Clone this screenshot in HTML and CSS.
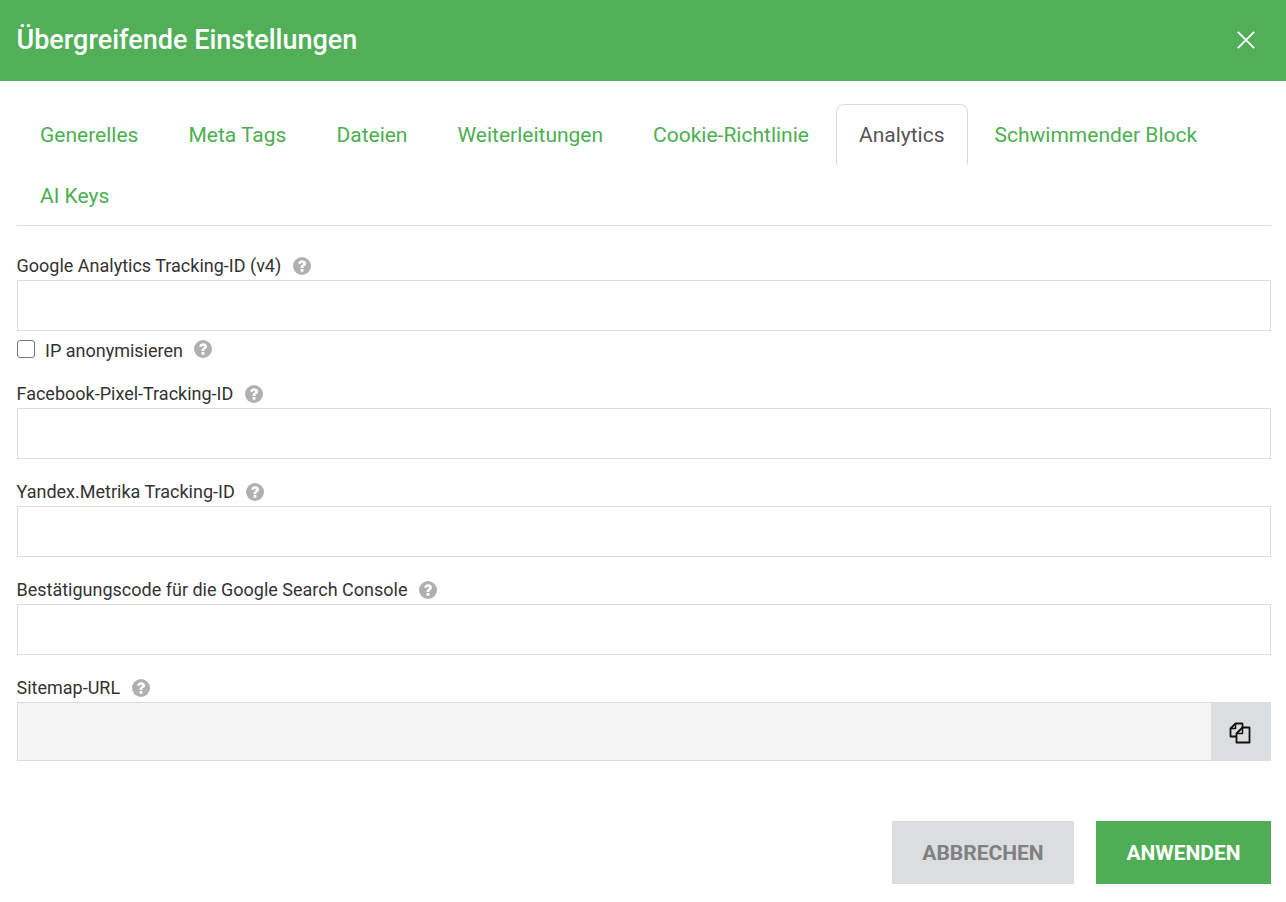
FILE: index.html
```html
<!DOCTYPE html>
<html lang="de">
<head>
<meta charset="utf-8">
<title>Übergreifende Einstellungen</title>
<link rel="stylesheet" href="styles.css">
</head>
<body>
<svg class="defs" width="0" height="0" aria-hidden="true">
  <symbol id="help" viewBox="0 0 18 18">
    <circle cx="9" cy="9" r="9" fill="#b0b0b0"/>
    <path d="M5.200 6.700C5.400 4.500 6.900 3.200 9.200 3.200c2.300 0 3.900 1.300 3.900 3.200 0 1.300-.7 2-1.700 2.700-.8.500-1 .8-1 1.500v.3H7.600v-.6c0-1.200.4-1.800 1.300-2.400.8-.5 1.100-.8 1.100-1.300 0-.5-.4-.9-1-.9-.7 0-1 .4-1.100 1.100z" fill="#fff"/>
    <rect x="7.600" y="11.900" width="2.800" height="2.800" rx=".3" fill="#fff"/>
  </symbol>
</svg>
<header class="header">
  <h1 class="title">Übergreifende Einstellungen</h1>
  <button class="close" aria-label="Schließen">
    <svg width="18" height="18" viewBox="0 0 18 18"><path d="M.8.800l16.400 16.400M17.200.800L.8 17.200" stroke="#fff" stroke-width="1.900" fill="none"/></svg>
  </button>
</header>
<main class="body">
  <nav class="tabs">
    <a class="tab">Generelles</a>
    <a class="tab">Meta Tags</a>
    <a class="tab">Dateien</a>
    <a class="tab">Weiterleitungen</a>
    <a class="tab">Cookie-Richtlinie</a>
    <a class="tab active">Analytics</a>
    <a class="tab">Schwimmender Block</a>
    <a class="tab">AI Keys</a>
  </nav>
  <form class="form">
    <div class="group first">
      <label class="label">Google Analytics Tracking-ID (v4)<svg class="help"><use href="#help"/></svg></label>
      <input class="input" type="text">
      <label class="check"><input class="box" type="checkbox"><span>IP anonymisieren</span><svg class="help"><use href="#help"/></svg></label>
    </div>
    <div class="group after-check">
      <label class="label">Facebook-Pixel-Tracking-ID<svg class="help"><use href="#help"/></svg></label>
      <input class="input" type="text">
    </div>
    <div class="group">
      <label class="label">Yandex.Metrika Tracking-ID<svg class="help"><use href="#help"/></svg></label>
      <input class="input" type="text">
    </div>
    <div class="group">
      <label class="label">Bestätigungscode für die Google Search Console<svg class="help"><use href="#help"/></svg></label>
      <input class="input" type="text">
    </div>
    <div class="group">
      <label class="label">Sitemap-URL<svg class="help"><use href="#help"/></svg></label>
      <div class="copy-row">
        <input class="input readonly" type="text" readonly>
        <button class="copy" type="button" aria-label="Kopieren">
          <svg width="24" height="24" viewBox="0 0 24 24" fill="none" stroke="#111" stroke-width="1.800" stroke-linejoin="round">
            <path d="M14.500 7.500V2.500H7.500L2.500 7.500V15.500H8.500"/>
            <path d="M7.500 2.800V7.500H2.800" stroke-width="1.500"/>
            <path d="M21.500 6.500H14.500L8.500 12.500V21.500H21.500Z"/>
            <path d="M14.500 6.800V12.500H8.800" stroke-width="1.500"/>
          </svg>
        </button>
      </div>
    </div>
    <div class="actions">
      <button class="btn cancel" type="button">ABBRECHEN</button>
      <button class="btn apply" type="button">ANWENDEN</button>
    </div>
  </form>
</main>
</body>
</html>
```
FILE: styles.css
```css
* { box-sizing: border-box; }
html, body { margin: 0; padding: 0; }
body {
  font-family: Roboto, "Liberation Sans", sans-serif;
  color: #333;
  background: #fff;
  height: 902px;
  overflow: hidden;
}
.defs { position: absolute; }
.header {
  height: 81px;
  background: #50af57;
  display: flex;
  align-items: center;
  justify-content: space-between;
  padding: 0 31px 2px 17px;
}
.title {
  margin: 0 0 0 -.5px;
  font-size: 27px;
  font-weight: 500;
  color: #fff;
}
.close {
  background: none;
  border: 0;
  padding: 0;
  width: 18px;
  height: 18px;
  display: flex;
}
.body { padding: 23px 15px 0 17px; }
.tabs {
  display: flex;
  flex-wrap: wrap;
  height: 122px;
  border-bottom: 1px solid #dcdcdc;
}
.tab {
  height: 61px;
  padding: 0 22px;
  margin-right: 4px;
  border: 1px solid transparent;
  border-bottom: 0;
  border-radius: 8px 8px 0 0;
  font-size: 21px;
  line-height: 60px;
  color: #4caf50;
}
.tab.active {
  color: #555;
  border-color: #dcdcdc;
}
.group { margin-top: 20px; }
.group.first { margin-top: 27px; }
.group.after-check { margin-top: 21px; }
.label {
  display: flex;
  align-items: center;
  height: 27px;
  margin-left: -.5px;
  padding-bottom: 2px;
  font-size: 18px;
  color: #333;
}
.help { width: 18px; height: 18px; margin-left: 11.500px; flex: none; }
.input {
  display: block;
  width: 100%;
  height: 51px;
  border: 1px solid #dcdcdc;
  background: #fff;
  padding: 0 12px;
  margin: 0;
  outline: 0;
}
.check {
  display: flex;
  align-items: center;
  height: 20px;
  margin-top: 9px;
  font-size: 18px;
}
.check .help { margin-top: -2px; }
.box {
  appearance: none;
  width: 18px;
  height: 18px;
  margin: -2px 10px 0 0;
  border: 1px solid #767676;
  border-radius: 3px;
  background: #fff;
}
.copy-row { display: flex; }
.input.readonly {
  flex: 1;
  height: 59px;
  background: #f5f5f5;
  border-right: 0;
}
.copy {
  width: 60px;
  height: 59px;
  border: 0;
  padding: 2px 2px 0 0;
  background: #dcddde;
  display: flex;
  align-items: center;
  justify-content: center;
}
.actions {
  display: flex;
  justify-content: flex-end;
  gap: 22px;
  margin-top: 60px;
}
.btn {
  height: 63px;
  border: 0;
  font-family: inherit;
  font-size: 21px;
  font-weight: 700;
  padding: 0;
}
.cancel { width: 182px; background: #dcddde; color: #7f8082; }
.apply { width: 175px; background: #4fae55; color: #fff; }
```
